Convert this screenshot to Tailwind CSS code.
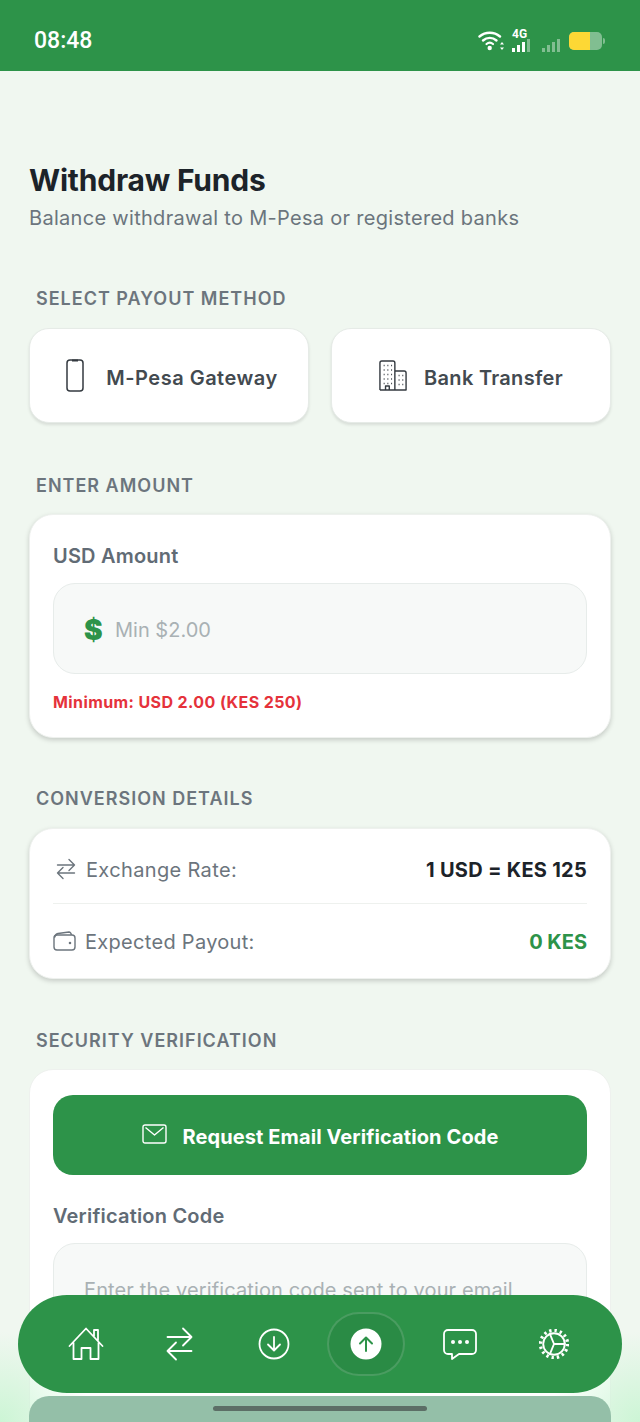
<!DOCTYPE html>
<html lang="en">
<head>
    <meta charset="UTF-8">
    <meta name="viewport" content="width=device-width, initial-scale=1.0">
    <title>Withdraw Funds</title>
    <script src="https://cdn.jsdelivr.net/npm/@tailwindcss/browser@4"></script>
</head>
<body class="bg-[#f0f7f0] font-['Inter',sans-serif]">
    <div class="relative h-[1422px] w-[640px] overflow-hidden">
        <!-- status bar -->
        <div class="flex h-[71px] items-center justify-between bg-[#2d9349] pl-[34px] pr-[35px] pt-[11px] text-white">
            <span class="font-['Roboto',sans-serif] text-[23px] font-medium">08:48</span>
            <div class="flex items-center">
                <svg width="26" height="22" viewBox="0 0 26 22" fill="none" stroke="white" stroke-linecap="round">
                    <path d="M1.500 6.500C7.500 1.500 16 1.500 22 6.500" stroke-width="2.400"/>
                    <path d="M5 10.500C9 7 14.500 7 18.500 10.500" stroke-width="2.400"/>
                    <path d="M8.500 14C10.500 12.300 13 12.300 15 14" stroke-width="2.200"/>
                    <circle cx="11.700" cy="18" r="2.200" fill="white" stroke="none"/>
                    <path d="M22 14.500l2-2.500 2 2.500zM22 17.500l2 2.500 2-2.500z" fill="white" stroke="none"/>
                </svg>
                <div class="relative ml-[8px] h-[22px] w-[21px]">
                    <span class="absolute left-0 top-[-2px] font-['Roboto',sans-serif] text-[12px] font-bold leading-none">4G</span>
                    <div class="absolute bottom-0 left-0 flex items-end gap-[2px]">
                        <i class="h-[4px] w-[3px] bg-white"></i><i class="h-[7px] w-[3px] bg-white"></i><i class="h-[10px] w-[3px] bg-white"></i><i class="h-[13px] w-[3px] bg-white/40"></i>
                    </div>
                </div>
                <div class="ml-[9px] flex items-end gap-[2px] self-end">
                    <i class="h-[4px] w-[3px] bg-white/40"></i><i class="h-[7px] w-[3px] bg-white/40"></i><i class="h-[10px] w-[3px] bg-white/40"></i><i class="h-[13px] w-[3px] bg-white/40"></i>
                </div>
                <div class="ml-[9px] flex h-[18px] w-[33px] overflow-hidden rounded-[5px] bg-white/40">
                    <div class="h-full w-[21px] bg-[#fdd835]"></div>
                </div>
                <div class="ml-[1px] h-[6px] w-[2px] rounded-r bg-white/40"></div>
            </div>
        </div>

        <main class="px-[29px] pt-[92px]">
            <h1 class="text-[30px] font-bold leading-[34px] tracking-[-0.2px] text-[#1c2329]">Withdraw Funds</h1>
            <p class="mt-[9px] text-[20px] leading-[24px] tracking-[0.3px] text-[#6b757d]">Balance withdrawal to M-Pesa or registered banks</p>

            <h2 class="mt-[57px] px-[7px] text-[18px] font-semibold leading-[24px] tracking-[1px] text-[#6c757d]">SELECT PAYOUT METHOD</h2>
            <div class="mt-[17px] grid grid-cols-2 gap-[22px]">
                <div class="flex h-[95px] items-center justify-center gap-[22px] rounded-[20px] border border-[#e6ebe7] bg-white pl-[6px] shadow-[0_2px_3px_rgba(0,0,0,0.1)]">
                    <svg width="18" height="33" viewBox="0 0 18 33" fill="none" stroke="#343a40" stroke-width="1.500"><rect x="1" y="1" width="16" height="31" rx="3"/><path d="M6 1.500h6" stroke-width="2"/></svg>
                    <span class="mt-[5px] text-[20px] font-semibold tracking-[0.5px] text-[#434a50]">M-Pesa Gateway</span>
                </div>
                <div class="flex h-[95px] items-center justify-center gap-[17px] rounded-[20px] border border-[#e6ebe7] bg-white shadow-[0_2px_3px_rgba(0,0,0,0.1)]">
                    <svg width="28" height="31" viewBox="0 0 30 31" fill="none" stroke="#343a40" stroke-width="1.500" stroke-linejoin="round" preserveAspectRatio="none">
                        <path d="M1 30V3a2 2 0 0 1 2-2h12a2 2 0 0 1 2 2v27M17 11h10a2 2 0 0 1 2 2v17H1M7 30v-4h4v4"/>
                        <path d="M5 5.500h1M9 5.500h1M13 5.500h1M5 10h1M9 10h1M13 10h1M5 14.500h1M9 14.500h1M13 14.500h1M5 19h1M9 19h1M13 19h1M5 23.500h1M9 23.500h1M13 23.500h1M21 15.500h1M25 15.500h1M21 20h1M25 20h1M21 24.500h1M25 24.500h1" stroke-width="1.600"/>
                    </svg>
                    <span class="mt-[5px] text-[20px] font-semibold tracking-[0.3px] text-[#434a50]">Bank Transfer</span>
                </div>
            </div>

            <h2 class="mt-[51px] px-[7px] text-[18px] font-semibold leading-[24px] tracking-[1px] text-[#6c757d]">ENTER AMOUNT</h2>
            <section class="mt-[16px] rounded-[24px] border border-[#eef1ee] bg-white px-[23px] pb-[25px] pt-[29px] shadow-[0_2px_5px_rgba(0,0,0,0.18)]">
                <div class="text-[20px] font-semibold leading-[24px] tracking-[0.2px] text-[#616b75]">USD Amount</div>
                <div class="mt-[15px] flex h-[91px] items-center gap-[14px] rounded-[22px] border border-[#e7ecea] bg-[#f7f9f8] pl-[30px] pt-[3px]">
                    <span class="w-[17px] text-[28px] font-black leading-none text-[#2d9349]">$</span>
                    <span class="text-[20px] text-[#a9b1b4]">Min $2.00</span>
                </div>
                <p class="mt-[18px] text-[16px] font-bold leading-[20px] tracking-[0.4px] text-[#e5323b]">Minimum: USD 2.00 (KES 250)</p>
            </section>

            <h2 class="mt-[49px] px-[7px] text-[18px] font-semibold leading-[24px] tracking-[1px] text-[#6c757d]">CONVERSION DETAILS</h2>
            <section class="mt-[17px] rounded-[24px] border border-[#eef1ee] bg-white px-[23px] shadow-[0_2px_5px_rgba(0,0,0,0.18)]">
                <div class="flex h-[75px] items-center justify-between border-b border-[#eef1ee] pt-[7px]">
                    <div class="flex items-center gap-[10px]">
                        <svg class="ml-[3px] mb-[2px]" width="20" height="22" viewBox="0 0 20 22" fill="none" stroke="#6c757d" stroke-width="1.400" stroke-linecap="round" stroke-linejoin="round"><path d="M1.500 7h17M13 1.500L18.500 7 13 12.500M18.500 15h-17M7 9.500L1.500 15 7 20.500"/></svg>
                        <span class="text-[20px] tracking-[0.35px] text-[#6c757d]">Exchange Rate:</span>
                    </div>
                    <span class="text-[20px] font-bold tracking-[0.27px] text-[#1c2329]">1 USD = KES 125</span>
                </div>
                <div class="flex h-[74px] items-center justify-between pt-[2px]">
                    <div class="flex items-center gap-[9px]">
                        <svg class="mb-[2px]" width="23" height="20" viewBox="0 0 23 20" fill="none" stroke="#6c757d" stroke-width="1.400" stroke-linejoin="round"><rect x="1" y="4" width="21" height="15" rx="3"/><path d="M1.500 6.500C2 4 3 3 5 2.500L16 1c1.500 0 2 1 2.500 3"/><circle cx="17" cy="12" r="0.600" fill="#6c757d"/></svg>
                        <span class="text-[20px] tracking-[0.3px] text-[#6c757d]">Expected Payout:</span>
                    </div>
                    <span class="text-[20px] font-bold text-[#2d9349]">0 KES</span>
                </div>
            </section>

            <h2 class="mt-[50px] px-[7px] text-[18px] font-semibold leading-[24px] tracking-[1px] text-[#6c757d]">SECURITY VERIFICATION</h2>
            <section class="mt-[16px] h-[500px] rounded-[24px] border border-[#eef1ee] bg-white px-[23px] pt-[25px]">
                <div class="flex h-[80px] items-center justify-center gap-[16px] rounded-[20px] bg-[#2d9349] pt-[3px]">
                    <svg class="mb-[5px]" width="25" height="20" viewBox="0 0 25 20" fill="none" stroke="white" stroke-width="1.400" stroke-linejoin="round"><rect x="1" y="1" width="23" height="18" rx="2"/><path d="M3.500 3.500L12.500 11l9-7.500"/></svg>
                    <span class="text-[20px] font-bold tracking-[0.1px] text-white">Request Email Verification Code</span>
                </div>
                <div class="mt-[29px] text-[20px] font-semibold leading-[24px] tracking-[0.2px] text-[#616b75]">Verification Code</div>
                <div class="mt-[15px] flex h-[92px] items-center rounded-[22px] border border-[#e7ecea] bg-[#f7f9f8] pl-[30px] pt-[2px]">
                    <span class="text-[20px] tracking-[0.13px] text-[#a9b1b4]">Enter the verification code sent to your email</span>
                </div>
            </section>
        </main>

        <!-- glow in the bottom corners, next button peeking under the nav, home indicator -->
        <div class="absolute bottom-0 left-0 right-0 h-[130px] bg-[radial-gradient(circle_at_0_100%,rgba(200,245,210,0.9),transparent_90px),radial-gradient(circle_at_100%_100%,rgba(200,245,210,0.9),transparent_90px)]"></div>
        <div class="absolute bottom-0 left-[29px] right-[29px] h-[26px] rounded-t-[20px] bg-[#94bfa8]"></div>
        <div class="absolute bottom-[11px] left-[213px] h-[5px] w-[214px] rounded-full bg-[#5c6e66]"></div>

        <!-- bottom nav -->
        <nav class="absolute left-[18px] top-[1295px] flex h-[98px] w-[604px] items-center rounded-[49px] bg-[#2d9349] pl-[21px] text-white">
            <div class="flex w-[93.500px] justify-center">
                <svg width="36" height="34" viewBox="0 0 36 34" fill="none" stroke="white" stroke-width="1.800" stroke-linecap="round" stroke-linejoin="round"><path d="M1.500 19L18 1.500 34.500 19M5.500 15.500V32h8V21h9v11h8V15.500M26 9V3h4v10"/></svg>
            </div>
            <div class="flex w-[93.500px] justify-center">
                <svg width="27" height="34" viewBox="0 0 27 34" fill="none" stroke="white" stroke-width="1.800" stroke-linecap="round" stroke-linejoin="round"><path d="M1.500 10h24M17 1.500l8.500 8.500-8.500 8.500M25.500 24h-24M10 15.500L1.500 24l8.500 8.500"/></svg>
            </div>
            <div class="flex w-[93.500px] justify-center pl-[2px]">
                <svg width="32" height="32" viewBox="0 0 32 32" fill="none" stroke="white" stroke-width="1.800" stroke-linecap="round" stroke-linejoin="round"><circle cx="16" cy="16" r="14.500"/><path d="M16 9v13M10 16.500l6 6 6-6"/></svg>
            </div>
            <div class="flex w-[93.500px] justify-center">
                <div class="flex h-[64px] w-[78px] items-center justify-center rounded-[32px] border-2 border-white/15 bg-black/5">
                    <svg width="32" height="32" viewBox="0 0 32 32" fill="none" stroke="#2d9349" stroke-width="2" stroke-linecap="round" stroke-linejoin="round"><circle cx="16" cy="16" r="15.500" fill="white" stroke="none"/><path d="M16 23V10M10 15.500l6-6 6 6"/></svg>
                </div>
            </div>
            <div class="flex w-[93.500px] justify-center">
                <svg width="34" height="31" viewBox="0 0 34 31" fill="none" stroke="white" stroke-width="1.800" stroke-linejoin="round"><path d="M5 1h24a4 4 0 0 1 4 4v16a4 4 0 0 1-4 4H16l-7 5v-5H5a4 4 0 0 1-4-4V5a4 4 0 0 1 4-4z"/><circle cx="10" cy="13" r="2" fill="white" stroke="none"/><circle cx="17" cy="13" r="2" fill="white" stroke="none"/><circle cx="24" cy="13" r="2" fill="white" stroke="none"/></svg>
            </div>
            <div class="flex w-[93.500px] justify-center pl-[2px]">
                <svg width="30" height="30" viewBox="0 0 32 32" fill="none" stroke="white" stroke-width="2" stroke-linecap="round"><circle cx="16" cy="16" r="11.500"/><path d="M16 16L11.500 5M16 16h11.500M16 16L11.500 27"/><circle cx="16" cy="16" r="14.500" stroke-width="3.500" stroke-dasharray="2.500 3.200" stroke-linecap="butt"/></svg>
            </div>
        </nav>
    </div>
</body>
</html>
